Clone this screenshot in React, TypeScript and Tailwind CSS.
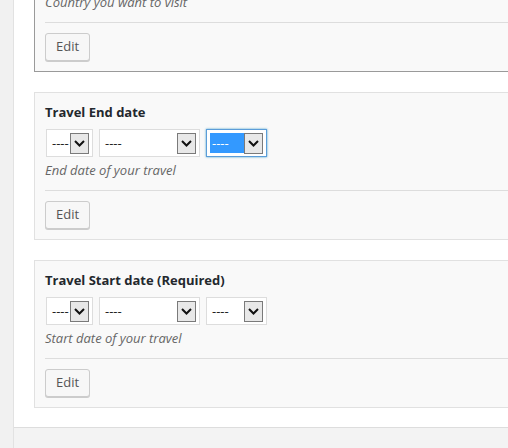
function Chevron() {
    return (
        <svg width="11" height="7" viewBox="0 0 11 7" fill="none">
            <path d="M1 1 L5.5 5.5 L10 1" stroke="#111" strokeWidth="2" />
        </svg>
    );
}

function FakeSelect({ width, focused = false }: { width: string; focused?: boolean }) {
    return (
        <div
            className={`flex h-[28px] items-center bg-white p-[3px] ${width} ${
                focused ? "border border-[#5b9dd9] shadow-[0_0_2px_rgba(30,140,190,0.8)]" : "border border-[#dddddd]"
            }`}
        >
            <span
                className={`flex h-[20px] flex-1 items-center pl-[2px] text-[13px] leading-none ${
                    focused ? "bg-[#3399ff] text-white" : "text-[#222]"
                }`}
            >
                ----
            </span>
            <span className="flex h-[21px] w-[19px] shrink-0 items-center justify-center border border-[#7a7a7a] bg-[#e8e8e8]">
                <Chevron />
            </span>
        </div>
    );
}

function EditButton() {
    return (
        <button className="mt-[10px] h-[28px] w-[45px] rounded-[3px] border border-[#cccccc] bg-[#f7f7f7] text-[13px] text-[#555] shadow-[0_1px_0_#cccccc]">
            Edit
        </button>
    );
}

function DateField({ title, help, focusLast = false }: { title: string; help: string; focusLast?: boolean }) {
    return (
        <div className="mt-[20px] border border-[#e1e1e1] bg-[#f9f9f9] px-[10px] pt-[10px] pb-[10px]">
            <div className="text-[13px] font-bold leading-[18px] text-[#23282d]">{title}</div>
            <div className="mt-[8px] ml-px flex gap-[6px]">
                <FakeSelect width="w-[47px]" />
                <FakeSelect width="w-[101px]" />
                <FakeSelect width="w-[61px]" focused={focusLast} />
            </div>
            <div className="mt-[4px] text-[13px] italic leading-[18px] text-[#666]">{help}</div>
            <div className="mt-[11px] h-px bg-[#dddddd]" />
            <EditButton />
        </div>
    );
}

export default function App() {
    return (
        <div className="flex h-[448px] w-[508px] overflow-hidden bg-white font-['Open_Sans',sans-serif]">
            <div className="w-[14px] shrink-0 border-r border-[#e2e2e2] bg-[#f1f1f1]" />
            <div className="flex min-w-0 flex-1 flex-col">
                <div className="flex-1 pl-[20px]">
                    <div className="w-[520px]">
                        <div className="-mt-[20px] border border-[#9a9a9a] bg-[#f9f9f9] px-[10px] pt-[12px] pb-[10px]">
                            <div className="text-[13px] italic leading-[18px] text-[#666]">Country you want to visit</div>
                            <div className="mt-[11px] h-px bg-[#dddddd]" />
                            <EditButton />
                        </div>
                        <DateField title="Travel End date" help="End date of your travel" focusLast />
                        <DateField title="Travel Start date (Required)" help="Start date of your travel" />
                    </div>
                </div>
                <div className="h-[21px] shrink-0 border-t border-[#dddddd] bg-[#f3f3f3]" />
            </div>
        </div>
    );
}
